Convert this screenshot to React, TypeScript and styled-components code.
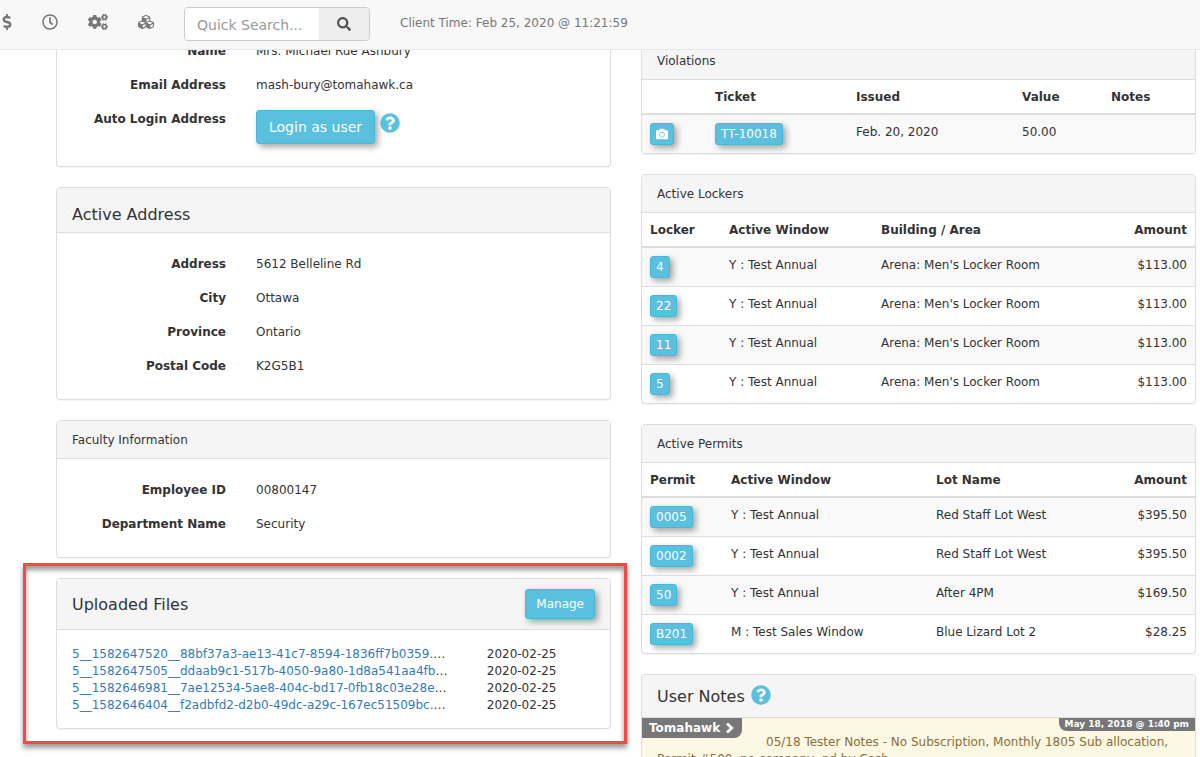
import React from "react";
import styled, { createGlobalStyle, css } from "styled-components";
import {
  FaCamera,
  FaCogs,
  FaCubes,
  FaDollarSign,
  FaQuestionCircle,
  FaRegClock,
  FaSearch,
} from "react-icons/fa";

const GlobalStyle = createGlobalStyle`
  * { box-sizing: border-box; }
  body {
    margin: 0;
    background: #fff;
    color: #333;
    font-family: Verdana, "DejaVu Sans", sans-serif;
    font-size: 12px;
    line-height: 17px;
  }
  button, input { font-family: inherit; }
`;

const Page = styled.div`
  display: flex;
  flex-direction: column;
  height: 100vh;
  overflow: hidden;
`;

const Navbar = styled.header`
  display: flex;
  flex: none;
  align-items: flex-start;
  height: 50px;
  padding-top: 7px;
  background: #f8f8f8;
  border-bottom: 1px solid #e7e7e7;
  color: #777;
`;

const NavIcons = styled.nav`
  display: flex;
  height: 30px;
  align-items: center;
`;

const NavLink = styled.a`
  display: flex;
  justify-content: center;
  width: 48px;
  color: #777;
  &:first-child {
    width: 38px;
    margin-left: -12px;
  }
`;

const SearchForm = styled.form`
  display: flex;
  width: 186px;
  height: 34px;
  margin-left: 14px;
  border: 1px solid #ccc;
  border-radius: 4px;
  overflow: hidden;
`;

const SearchInput = styled.input`
  flex: 1;
  min-width: 0;
  padding: 2px 12px 0;
  border: 0;
  background: #fff;
  font-size: 14px;
  &::placeholder { color: #999; opacity: 1; }
`;

const SearchButton = styled.button`
  display: flex;
  align-items: center;
  justify-content: center;
  width: 50px;
  border: 0;
  background: #eee;
  color: #555;
`;

const ClientTime = styled.span`
  margin: 8px 0 0 30px;
`;

const Columns = styled.main`
  display: grid;
  grid-template-columns: 1fr 1fr;
  gap: 30px;
  flex: 1;
  min-height: 0;
  padding: 0 4px 0 56px;
  overflow: hidden;
`;

const Column = styled.div`
  display: flex;
  flex-direction: column;
  gap: 20px;
  min-width: 0;
`;

const Panel = styled.section<{ $cut?: boolean }>`
  flex: none;
  border: 1px solid #ddd;
  border-radius: 4px;
  background: #fff;
  box-shadow: 0 1px 1px rgba(0, 0, 0, 0.05);
  ${(p) => p.$cut && css`
    border-top: 0;
    border-top-left-radius: 0;
    border-top-right-radius: 0;
  `}
`;

const headPadding = {
  regular: "10px 15px",
  cut: "2px 15px 10px",
  low: "15px 15px 7px",
};

const PanelHead = styled.div<{ $kind?: keyof typeof headPadding }>`
  display: flex;
  align-items: center;
  justify-content: space-between;
  padding: ${(p) => headPadding[p.$kind ?? "regular"]};
  background: #f5f5f5;
  border-bottom: 1px solid #ddd;
  border-radius: 3px 3px 0 0;
`;

const SmallTitle = styled.h3`
  height: 17px;
  margin: 0;
  font-size: 12px;
  font-weight: 400;
  line-height: 19px;
`;

const Title = styled.h2`
  display: flex;
  gap: 6px;
  height: 22px;
  margin: 0;
  font-size: 16px;
  font-weight: 400;
  line-height: 24px;
`;

const Details = styled.dl<{ $cut?: boolean }>`
  display: grid;
  grid-template-columns: 169px 1fr;
  column-gap: 30px;
  row-gap: 17px;
  margin: 0;
  padding: ${(p) => (p.$cut ? "0 0 22px" : "23px 0 24px")};
  ${(p) => p.$cut && css`margin-top: -7px;`}
`;

const Term = styled.dt`
  text-align: right;
  font-weight: 700;
`;

const Value = styled.dd`
  margin: 0;
`;

const Button = styled.button<{ $size: "xs" | "sm" | "md" }>`
  display: flex;
  align-items: center;
  flex: none;
  border: 1px solid #46b8da;
  border-radius: 3px;
  background: #5bc0de;
  color: #fff;
  box-shadow: 3px 3px 6px rgba(0, 0, 0, 0.35);
  ${(p) => p.$size === "xs" && css`
    height: 22px;
    padding: 0 5px;
    font-size: 12px;
    line-height: 20px;
  `}
  ${(p) => p.$size === "sm" && css`
    height: 30px;
    padding: 0 10px;
    font-size: 12px;
    line-height: 18px;
  `}
  ${(p) => p.$size === "md" && css`
    height: 34px;
    padding: 0 12px;
    font-size: 14px;
    line-height: 20px;
  `}
`;

const HelpLink = styled.a`
  display: flex;
  align-self: flex-start;
  color: #5bc0de;
`;

const LoginRow = styled.div`
  display: flex;
  align-items: flex-start;
  gap: 5px;
  margin-top: -1px;
  ${HelpLink} { padding-top: 3px; }
`;

const FileTable = styled.table`
  width: 100%;
  margin: 16px 0 14px;
  border-spacing: 0;
  table-layout: fixed;
  td { padding: 0 15px; }
`;

const FileCell = styled.td`
  width: 75%;
  overflow: hidden;
  white-space: nowrap;
`;

const FileLink = styled.a`
  color: #337ab7;
  text-decoration: none;
`;

const Highlight = styled.div`
  position: absolute;
  inset: -15px -16px -15px -33px;
  border: 3px solid #ff4444;
  box-shadow: 0 4px 5px rgba(0, 0, 0, 0.4), inset 0 4px 5px rgba(0, 0, 0, 0.4);
  pointer-events: none;
`;

const Marked = styled.div`
  position: relative;
`;

const DataTable = styled.table`
  width: 100%;
  border-spacing: 0;
  table-layout: fixed;
  th, td {
    padding: 8px;
    text-align: left;
    vertical-align: top;
    white-space: nowrap;
    line-height: 19px;
  }
  th {
    padding-bottom: 6px;
    border-bottom: 2px solid #ddd;
  }
  tbody tr:nth-child(odd) { background: #f9f9f9; }
  tbody tr + tr td { border-top: 1px solid #ddd; }
`;

const HeadCell = styled.th<{ $w?: number; $right?: boolean }>`
  width: ${(p) => (p.$w ? `${p.$w}px` : "auto")};
  && { text-align: ${(p) => (p.$right ? "right" : "left")}; }
`;

const Cell = styled.td<{ $right?: boolean }>`
  && { text-align: ${(p) => (p.$right ? "right" : "left")}; }
`;

const Note = styled.article`
  position: relative;
  padding: 16px 15px;
  background: #fcf8e3;
  color: #8a6d3b;
  p { margin: 0; text-indent: 109px; }
`;

const NoteAuthor = styled.span`
  position: absolute;
  top: 0;
  left: 0;
  display: flex;
  align-items: center;
  gap: 5px;
  height: 20px;
  padding: 0 7px;
  border-bottom-right-radius: 8px;
  background: #777;
  color: #fff;
  font-weight: 700;
`;

const NoteDate = styled.time`
  position: absolute;
  top: 0;
  right: 0;
  padding: 0 6px;
  border-bottom-left-radius: 8px;
  background: #777;
  color: #fff;
  font-size: 9px;
  font-weight: 700;
  line-height: 13px;
`;

const files = [
  "5__1582647520__88bf37a3-ae13-41c7-8594-1836ff7b0359.",
  "5__1582647505__ddaab9c1-517b-4050-9a80-1d8a541aa4fb",
  "5__1582646981__7ae12534-5ae8-404c-bd17-0fb18c03e28e",
  "5__1582646404__f2adbfd2-d2b0-49dc-a29c-167ec51509bc.",
];

type ColumnSpec = { label: string; width?: number };

function Listing({ title, columns, rows }: { title: string; columns: ColumnSpec[]; rows: string[][] }) {
  return (
    <Panel>
      <PanelHead><SmallTitle>{title}</SmallTitle></PanelHead>
      <DataTable>
        <thead>
          <tr>
            {columns.map((c, i) => (
              <HeadCell key={c.label} $w={c.width} $right={i === 3}>{c.label}</HeadCell>
            ))}
          </tr>
        </thead>
        <tbody>
          {rows.map((r) => (
            <tr key={r[0]}>
              <Cell><Button $size="xs">{r[0]}</Button></Cell>
              <Cell>{r[1]}</Cell>
              <Cell>{r[2]}</Cell>
              <Cell $right>{r[3]}</Cell>
            </tr>
          ))}
        </tbody>
      </DataTable>
    </Panel>
  );
}

function Help() {
  return <HelpLink href="#help" aria-label="Help"><FaQuestionCircle size={20} /></HelpLink>;
}

function Chevron() {
  return (
    <svg width="10" height="12" viewBox="0 0 10 12" aria-hidden="true">
      <path d="M2 1.5 6.8 6 2 10.5" fill="none" stroke="currentColor" strokeWidth="2.8" />
    </svg>
  );
}

export default function App() {
  return (
    <Page>
      <GlobalStyle />
      <Navbar>
        <NavIcons>
          <NavLink href="#billing" aria-label="Billing"><FaDollarSign size={16} /></NavLink>
          <NavLink href="#history" aria-label="History"><FaRegClock size={16} /></NavLink>
          <NavLink href="#settings" aria-label="Settings"><FaCogs size={20} /></NavLink>
          <NavLink href="#modules" aria-label="Modules"><FaCubes size={16} /></NavLink>
        </NavIcons>
        <SearchForm>
          <SearchInput placeholder="Quick Search..." aria-label="Quick Search" />
          <SearchButton type="button" aria-label="Search"><FaSearch size={14} /></SearchButton>
        </SearchForm>
        <ClientTime>Client Time: Feb 25, 2020 @ 11:21:59</ClientTime>
      </Navbar>
      <Columns>
        <Column>
          <Panel $cut>
            <Details $cut>
              <Term>Name</Term>
              <Value>Mrs. Michael Rue Ashbury</Value>
              <Term>Email Address</Term>
              <Value>mash-bury@tomahawk.ca</Value>
              <Term>Auto Login Address</Term>
              <Value>
                <LoginRow>
                  <Button $size="md">Login as user</Button>
                  <Help />
                </LoginRow>
              </Value>
            </Details>
          </Panel>
          <Panel>
            <PanelHead $kind="low"><Title>Active Address</Title></PanelHead>
            <Details>
              <Term>Address</Term>
              <Value>5612 Belleline Rd</Value>
              <Term>City</Term>
              <Value>Ottawa</Value>
              <Term>Province</Term>
              <Value>Ontario</Value>
              <Term>Postal Code</Term>
              <Value>K2G5B1</Value>
            </Details>
          </Panel>
          <Panel>
            <PanelHead><SmallTitle>Faculty Information</SmallTitle></PanelHead>
            <Details>
              <Term>Employee ID</Term>
              <Value>00800147</Value>
              <Term>Department Name</Term>
              <Value>Security</Value>
            </Details>
          </Panel>
          <Marked>
            <Panel>
              <PanelHead>
                <Title>Uploaded Files</Title>
                <Button $size="sm">Manage</Button>
              </PanelHead>
              <FileTable>
                <tbody>
                  {files.map((f) => (
                    <tr key={f}>
                      <FileCell><FileLink href={`#${f}`}>{f}</FileLink>…</FileCell>
                      <td>2020-02-25</td>
                    </tr>
                  ))}
                </tbody>
              </FileTable>
            </Panel>
            <Highlight />
          </Marked>
        </Column>
        <Column>
          <Panel $cut>
            <PanelHead $kind="cut"><SmallTitle>Violations</SmallTitle></PanelHead>
            <DataTable>
              <thead>
                <tr>
                  <HeadCell $w={65} aria-label="Photo" />
                  <HeadCell $w={141}>Ticket</HeadCell>
                  <HeadCell $w={166}>Issued</HeadCell>
                  <HeadCell $w={89}>Value</HeadCell>
                  <HeadCell>Notes</HeadCell>
                </tr>
              </thead>
              <tbody>
                <tr>
                  <Cell><Button $size="xs" aria-label="Photo"><FaCamera size={12} /></Button></Cell>
                  <Cell><Button $size="xs">TT-10018</Button></Cell>
                  <Cell>Feb. 20, 2020</Cell>
                  <Cell>50.00</Cell>
                  <Cell />
                </tr>
              </tbody>
            </DataTable>
          </Panel>
          <Listing
            title="Active Lockers"
            columns={[
              { label: "Locker", width: 79 },
              { label: "Active Window", width: 152 },
              { label: "Building / Area" },
              { label: "Amount", width: 90 },
            ]}
            rows={["4", "22", "11", "5"].map((n) => [n, "Y : Test Annual", "Arena: Men's Locker Room", "$113.00"])}
          />
          <Listing
            title="Active Permits"
            columns={[
              { label: "Permit", width: 81 },
              { label: "Active Window", width: 205 },
              { label: "Lot Name" },
              { label: "Amount", width: 90 },
            ]}
            rows={[
              ["0005", "Y : Test Annual", "Red Staff Lot West", "$395.50"],
              ["0002", "Y : Test Annual", "Red Staff Lot West", "$395.50"],
              ["50", "Y : Test Annual", "After 4PM", "$169.50"],
              ["B201", "M : Test Sales Window", "Blue Lizard Lot 2", "$28.25"],
            ]}
          />
          <Panel>
            <PanelHead><Title>User Notes <Help /></Title></PanelHead>
            <Note>
              <NoteAuthor>Tomahawk <Chevron /></NoteAuthor>
              <NoteDate>May 18, 2018 @ 1:40 pm</NoteDate>
              <p>05/18 Tester Notes - No Subscription, Monthly 1805 Sub allocation, Permit #500, no company, pd by Cash</p>
            </Note>
          </Panel>
        </Column>
      </Columns>
    </Page>
  );
}
